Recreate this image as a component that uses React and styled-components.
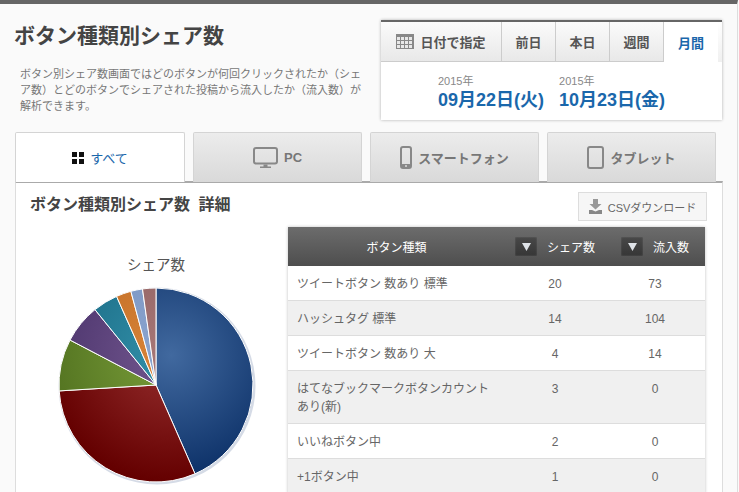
import React from 'react';
import styled, { createGlobalStyle } from 'styled-components';

const GlobalStyle = createGlobalStyle`
  html, body {
    margin: 0;
    height: 492px;
    overflow: hidden;
    background: #fafafa;
    font-family: "Liberation Sans", "Noto Sans CJK JP", sans-serif;
    color: #555;
  }
`;

const Page = styled.div`
  width: 738px;
  height: 492px;
  box-sizing: border-box;
  border-top: 4px solid #666;
  border-right: 1px solid #ddd;
  overflow: hidden;
`;

const Header = styled.header`
  display: flex;
  justify-content: space-between;
  width: 707px;
  margin-left: 15px;
  padding-top: 16px;
`;

const Intro = styled.div`
  width: 350px;
`;

const Title = styled.h1`
  margin: 1px 0 0 -1px;
  font-size: 21px;
  line-height: 30px;
  font-weight: 700;
  color: #444;
`;

const Description = styled.p`
  margin: 15px 0 0 5px;
  font-size: 11px;
  line-height: 16px;
  color: #777;
`;

const DateBox = styled.div`
  width: 341px;
  height: 100px;
  box-sizing: border-box;
  border-top: 2px solid #666;
  background: #fff;
  box-shadow: 0 0 3px rgba(0, 0, 0, 0.3);
`;

const RangeTabs = styled.div`
  display: flex;
  height: 40px;
`;

const RangeTab = styled.div`
  flex: 0 0 ${(p) => p.$width}px;
  box-sizing: border-box;
  display: flex;
  align-items: center;
  justify-content: center;
  gap: 6px;
  font-size: 13px;
  font-weight: 700;
  color: ${(p) => (p.$active ? '#1a67ab' : '#555')};
  background: ${(p) => (p.$active ? '#fff' : 'linear-gradient(#fbfbfb, #e8e8e8)')};
  border-right: ${(p) => (p.$active ? 'none' : '1px solid #ccc')};
  border-bottom: ${(p) => (p.$active ? 'none' : '1px solid #ccc')};
`;

const RangeFiller = styled.div`
  flex: 1;
  background: linear-gradient(#ffffff, #f0f0f0);
`;

const DateRow = styled.div`
  display: flex;
  gap: 15px;
  padding: 11px 0 0 57px;
`;

const DateBlock = styled.div`
  display: flex;
  flex-direction: column;
`;

const Year = styled.span`
  font-size: 11px;
  line-height: 16px;
  color: #888;
`;

const FullDate = styled.span`
  font-size: 18px;
  line-height: 23px;
  font-weight: 700;
  color: #1a67ab;
  white-space: nowrap;
`;

const DeviceTabs = styled.nav`
  position: relative;
  z-index: 1;
  display: flex;
  gap: 8px;
  margin: 12px 0 -1px 15px;
`;

const DeviceTab = styled.div`
  width: ${(p) => (p.$active ? 170 : 169)}px;
  height: 50px;
  box-sizing: border-box;
  display: flex;
  align-items: center;
  justify-content: center;
  gap: 6px;
  font-size: 13px;
  font-weight: ${(p) => (p.$active ? 400 : 700)};
  color: ${(p) => (p.$active ? '#1a67ab' : '#777')};
  background: ${(p) => (p.$active ? '#fff' : 'linear-gradient(#ececec, #d9d9d9)')};
  border: 1px solid #d4d4d4;
  border-bottom: none;
  border-radius: 2px 2px 0 0;
`;

const Panel = styled.section`
  width: 708px;
  box-sizing: border-box;
  margin-left: 15px;
  height: 320px;
  background: #fff;
  border-top: 2px solid #aaa;
  border-left: 1px solid #ddd;
  border-right: 1px solid #ddd;
  padding: 9px 15px 0 14px;
`;

const PanelHead = styled.div`
  display: flex;
  justify-content: space-between;
  align-items: flex-start;
`;

const PanelTitle = styled.h2`
  margin: 3px 0 0;
  font-size: 16px;
  line-height: 20px;
  font-weight: 700;
  word-spacing: 4px;
  color: #444;
`;

const CsvButton = styled.button`
  width: 129px;
  height: 29px;
  display: flex;
  align-items: center;
  justify-content: center;
  gap: 6px;
  padding: 0;
  font: inherit;
  font-size: 11px;
  color: #666;
  background: #f6f6f6;
  border: 1px solid #ddd;
`;

const Body = styled.div`
  display: flex;
  margin-top: 6px;
`;

const ChartBox = styled.div`
  width: 258px;
  flex: none;
`;

const DataTable = styled.table`
  width: 417px;
  table-layout: fixed;
  border-collapse: collapse;
  box-shadow: 0 0 3px rgba(0, 0, 0, 0.25);
  font-size: 12px;
  color: #666;
`;

const HeadRow = styled.tr`
  height: 39px;
  background: linear-gradient(#6c6c6c, #4e4e4e);
`;

const HeadCell = styled.th`
  width: ${(p) => p.$width}px;
  padding: 0;
  font-size: 12px;
  font-weight: 400;
  color: #fff;
`;

const HeadInner = styled.div`
  display: flex;
  align-items: center;
  gap: 10px;
  padding-left: ${(p) => p.$inset}px;
`;

const SortButton = styled.span`
  width: 22px;
  height: 19px;
  display: flex;
  align-items: center;
  justify-content: center;
  background: linear-gradient(#484848, #363636);
  box-shadow: inset 0 0 2px rgba(255, 255, 255, 0.2);
`;

const Row = styled.tr`
  background: ${(p) => (p.$odd ? '#f0f0f0' : '#fff')};
  border-bottom: 1px solid #ddd;
`;

const NameCell = styled.td`
  padding: 9px 14px 7px 9px;
  line-height: 18px;
  vertical-align: top;
`;

const NumCell = styled.td`
  padding: 9px 0 7px;
  line-height: 18px;
  text-align: center;
  vertical-align: top;
`;

const CalendarIcon = () => (
  <svg width="18" height="15" viewBox="0 0 18 15">
    <rect width="18" height="15" fill="#888" />
    <g fill="#e8e8e8">
      {[3, 7, 11].map((y) =>
        [1, 5, 9, 13].map((x) => <rect key={`${x}-${y}`} x={x} y={y} width="3" height="3" />)
      )}
    </g>
  </svg>
);

const GridIcon = () => (
  <svg width="12" height="12" viewBox="0 0 12 12">
    <path d="M0 0h5v5H0zM7 0h5v5H7zM0 7h5v5H0zM7 7h5v5H7z" fill="#111" />
  </svg>
);

const MonitorIcon = () => (
  <svg width="25" height="22" viewBox="0 0 25 22">
    <rect x="1" y="1" width="23" height="15.5" rx="2" fill="none" stroke="#888" strokeWidth="2" />
    <path d="M10.5 17.5h4v2h3.5v1.5H7V19.500h3.500z" fill="#888" />
  </svg>
);

const PhoneIcon = () => (
  <svg width="12" height="23" viewBox="0 0 12 23">
    <rect x="1" y="1" width="10" height="21" rx="2" fill="none" stroke="#888" strokeWidth="2" />
    <rect x="1" y="18" width="10" height="4" rx="1.5" fill="#888" />
    <circle cx="6" cy="20" r="1" fill="#ddd" />
  </svg>
);

const TabletIcon = () => (
  <svg width="17" height="23" viewBox="0 0 17 23">
    <rect x="1" y="1" width="15" height="21" rx="2" fill="none" stroke="#888" strokeWidth="2" />
  </svg>
);

const DownloadIcon = () => (
  <svg width="13" height="15" viewBox="0 0 13 15">
    <path d="M4 0h5v5h3.500L6.500 10.500 .5 5H4z" fill="#999" />
    <path d="M0 11h3l3.500 1.500L10 11h3v4H0z" fill="#888" />
  </svg>
);

const TriangleIcon = () => (
  <svg width="9" height="8" viewBox="0 0 9 8">
    <path d="M0 0h9L4.500 8z" fill="#dfe3e8" />
  </svg>
);

const slices = [
  { end: 156.3, from: '#41699f', to: '#0b2f66' },
  { end: 266.5, from: '#962f2f', to: '#640000' },
  { end: 297.6, from: '#7a9e3a', to: '#527220' },
  { end: 321, from: '#73578f', to: '#4b346c' },
  { end: 336, from: '#3391aa', to: '#1a6a84' },
  { end: 345, from: '#d9853a', to: '#c06c24' },
  { end: 352, from: '#8ba5d0', to: '#7a94c0' },
  { end: 360, from: '#a87878', to: '#8f6060' },
];

const CX = 97;
const CY = 97;
const R = 97;

const point = (deg) => {
  const a = ((deg - 90) * Math.PI) / 180;
  return `${(CX + R * Math.cos(a)).toFixed(2)} ${(CY + R * Math.sin(a)).toFixed(2)}`;
};

const PieChart = () => (
  <svg width="258" height="258" viewBox="-29 -61 258 258">
    <defs>
      {slices.map((s, i) => (
        <radialGradient key={i} id={`slice${i}`} gradientUnits="userSpaceOnUse" cx={CX + 15} cy={CY - 30} r={R + 30}>
          <stop offset="0" stopColor={s.from} />
          <stop offset="1" stopColor={s.to} />
        </radialGradient>
      ))}
    </defs>
    <text x="97" y="-18" textAnchor="middle" fontSize="14.500" fill="#555">シェア数</text>
    <circle cx={CX + 1} cy={CY + 1} r={R + 1.5} fill="#d5dbe6" />
    {slices.map((s, i) => {
      const start = i === 0 ? 0 : slices[i - 1].end;
      const large = s.end - start > 180 ? 1 : 0;
      return (
        <path
          key={i}
          d={`M${CX} ${CY}L${point(start)}A${R} ${R} 0 ${large} 1 ${point(s.end)}Z`}
          fill={`url(#slice${i})`}
          stroke="#fff"
          strokeWidth="1"
        />
      );
    })}
  </svg>
);

const rows = [
  ['ツイートボタン 数あり 標準', 20, 73],
  ['ハッシュタグ 標準', 14, 104],
  ['ツイートボタン 数あり 大', 4, 14],
  ['はてなブックマークボタンカウントあり(新)', 3, 0],
  ['いいねボタン中', 2, 0],
  ['+1ボタン中', 1, 0],
];

export default function App() {
  return (
    <Page>
      <GlobalStyle />
      <Header>
        <Intro>
          <Title>ボタン種類別シェア数</Title>
          <Description>
            ボタン別シェア数画面ではどのボタンが何回クリックされたか（シェア数）とどのボタンでシェアされた投稿から流入したか（流入数）が解析できます。
          </Description>
        </Intro>
        <DateBox>
          <RangeTabs>
            <RangeTab $width={121}><CalendarIcon />日付で指定</RangeTab>
            <RangeTab $width={54}>前日</RangeTab>
            <RangeTab $width={54}>本日</RangeTab>
            <RangeTab $width={54}>週間</RangeTab>
            <RangeTab $width={54} $active>月間</RangeTab>
            <RangeFiller />
          </RangeTabs>
          <DateRow>
            <DateBlock>
              <Year>2015年</Year>
              <FullDate>09月22日(火)</FullDate>
            </DateBlock>
            <DateBlock>
              <Year>2015年</Year>
              <FullDate>10月23日(金)</FullDate>
            </DateBlock>
          </DateRow>
        </DateBox>
      </Header>
      <DeviceTabs>
        <DeviceTab $active><GridIcon />すべて</DeviceTab>
        <DeviceTab><MonitorIcon />PC</DeviceTab>
        <DeviceTab><PhoneIcon />スマートフォン</DeviceTab>
        <DeviceTab><TabletIcon />タブレット</DeviceTab>
      </DeviceTabs>
      <Panel>
        <PanelHead>
          <PanelTitle>ボタン種類別シェア数 詳細</PanelTitle>
          <CsvButton><DownloadIcon />CSVダウンロード</CsvButton>
        </PanelHead>
        <Body>
          <ChartBox><PieChart /></ChartBox>
          <DataTable>
            <thead>
              <HeadRow>
                <HeadCell $width={217}>ボタン種類</HeadCell>
                <HeadCell $width={100}>
                  <HeadInner $inset={10}><SortButton><TriangleIcon /></SortButton>シェア数</HeadInner>
                </HeadCell>
                <HeadCell $width={100}>
                  <HeadInner $inset={16}><SortButton><TriangleIcon /></SortButton>流入数</HeadInner>
                </HeadCell>
              </HeadRow>
            </thead>
            <tbody>
              {rows.map(([name, shares, visits], i) => (
                <Row key={name} $odd={i % 2 === 1}>
                  <NameCell>{name}</NameCell>
                  <NumCell>{shares}</NumCell>
                  <NumCell>{visits}</NumCell>
                </Row>
              ))}
            </tbody>
          </DataTable>
        </Body>
      </Panel>
    </Page>
  );
}
